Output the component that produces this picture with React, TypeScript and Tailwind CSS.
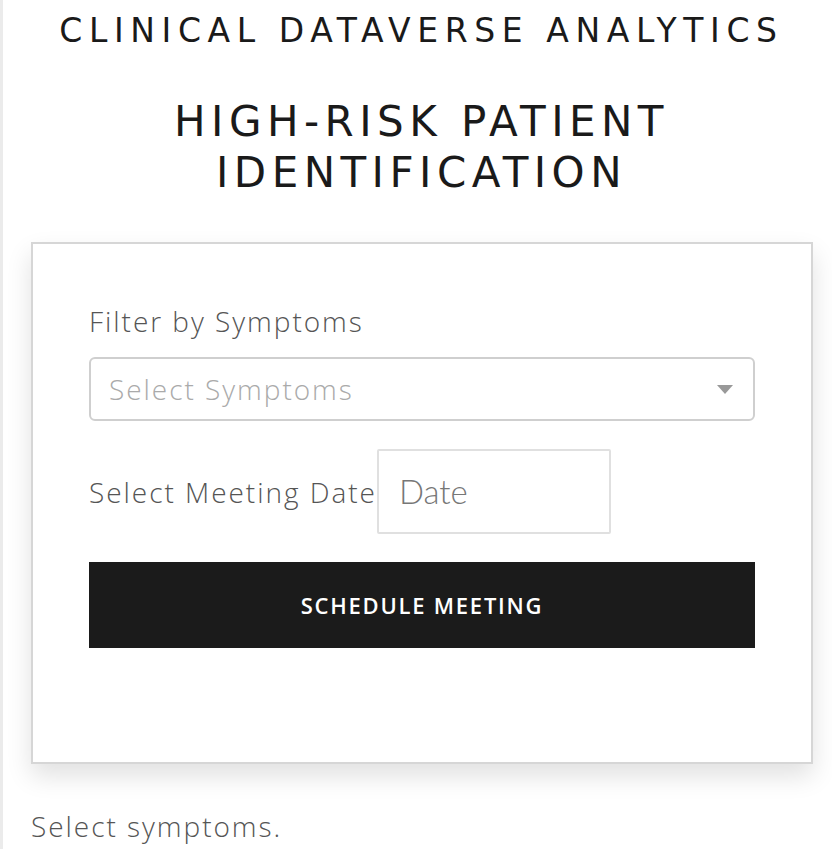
import React from "react";

export default function App() {
  return (
    <div className="min-h-[849px] border-l-[3px] border-[#ebebeb] bg-white text-[#1a1a1a]">
      <div className="flex flex-col items-center pt-[12px] pl-[8px] font-['DejaVu_Sans',sans-serif]">
        <h1 className="text-[33px] leading-[38px] tracking-[0.2em] font-normal">
          CLINICAL DATAVERSE ANALYTICS
        </h1>
        <h2 className="mt-[46px] w-[560px] text-center text-[42px] leading-[51px] tracking-[0.13em] font-normal">
          HIGH-RISK PATIENT IDENTIFICATION
        </h2>
      </div>

      <div className="ml-[28px] mr-[19px] mt-[44px] border-2 border-[#d6d6d6] bg-white px-[56px] pt-[60px] pb-[114px] font-['Open_Sans',Lato,sans-serif] shadow-[0_12px_24px_rgba(0,0,0,0.12)]">
        <label className="block text-[28px] leading-[34px] font-light tracking-[0.07em] text-[#555]">
          Filter by Symptoms
        </label>
        <div className="mt-[19px] flex h-[64px] items-center justify-between rounded-[6px] border-2 border-[#cfcfcf] pl-[18px] pr-[20px]">
          <span className="text-[28px] font-light tracking-[0.07em] text-[#aaa]">Select Symptoms</span>
          <svg width="16" height="9" viewBox="0 0 16 9">
            <path d="M0 0h16L8 9z" fill="#999" />
          </svg>
        </div>
        <div className="mt-[28px] flex items-center">
          <span className="text-[28px] font-light tracking-[0.07em] text-[#555]">Select Meeting Date</span>
          <div className="flex h-[85px] w-[234px] items-center rounded-[2px] border-2 border-[#e0e0e0] pl-[20px]">
            <span className="font-['Lato',sans-serif] text-[33px] font-light text-[#777]">Date</span>
          </div>
        </div>
        <button className="mt-[28px] flex h-[86px] w-full items-center justify-center bg-[#1b1b1b] text-[22px] font-semibold tracking-[0.08em] text-white">
          SCHEDULE MEETING
        </button>
      </div>

      <p className="mt-[46px] ml-[28px] font-['Open_Sans',Lato,sans-serif] text-[28px] leading-[32px] font-light tracking-[0.07em] text-[#555]">
        Select symptoms.
      </p>
    </div>
  );
}
